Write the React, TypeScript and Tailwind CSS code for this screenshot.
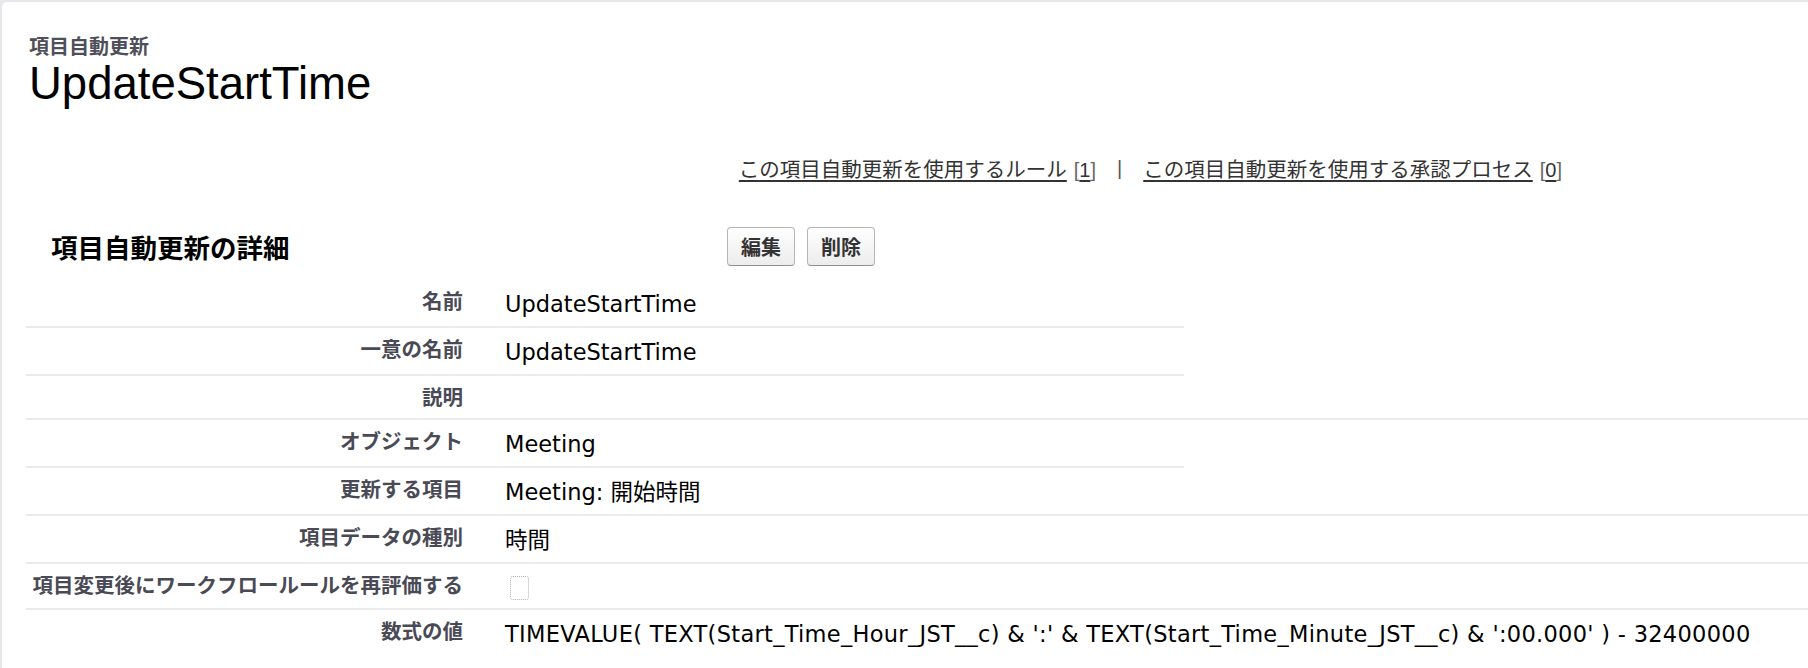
import React from "react";

const cjk = "font-['Noto_Sans_CJK_JP',sans-serif]";
const val = "font-['DejaVu_Sans','Noto_Sans_CJK_JP',sans-serif]";

type Row = { label: string; value?: React.ReactNode; h: string; full: boolean; wide?: boolean };

const ROWS: Row[] = [
  { label: "名前", value: "UpdateStartTime", h: "h-[46px]", full: false },
  { label: "一意の名前", value: "UpdateStartTime", h: "h-[46px]", full: false },
  { label: "説明", h: "h-[42px]", full: true },
  { label: "オブジェクト", value: "Meeting", h: "h-[46px]", full: false },
  { label: "更新する項目", value: "Meeting: 開始時間", h: "h-[46px]", full: true },
  { label: "項目データの種別", value: "時間", h: "h-[46px]", full: true },
  {
    label: "項目変更後にワークフロールールを再評価する",
    value: <span className="ml-[5px] mt-[-1px] block h-[24px] w-[19px] rounded-[3px] border border-dotted border-[#b0b0b0]" />,
    h: "h-[44px]",
    full: true,
  },
  {
    label: "数式の値",
    value: "TIMEVALUE( TEXT(Start_Time_Hour_JST__c) & ':' & TEXT(Start_Time_Minute_JST__c) & ':00.000' ) - 32400000",
    h: "h-[46px]",
    full: false,
    wide: true,
  },
];

function UsageLink({ text, count }: { text: string; count: number }) {
  return (
    <span className="flex items-baseline">
      <a className={`${cjk} text-[20.5px] leading-[20px] text-[#333] underline underline-offset-[3px]`}>{text}</a>
      <span className="ml-[7px] font-['Liberation_Sans',sans-serif] text-[20px] leading-[20px] text-[#666]">
        [<span className="text-[#333] underline underline-offset-[3px]">{count}</span>]
      </span>
    </span>
  );
}

function Btn({ children }: { children: React.ReactNode }) {
  return (
    <button
      type="button"
      className={`${cjk} h-[39px] rounded-[4px] border border-[#b5b5b5] border-b-[#8f8f8f] bg-gradient-to-b from-white to-[#ececec] px-[13px] text-[20px] font-bold leading-[20px] text-[#333]`}
    >
      {children}
    </button>
  );
}

export default function App() {
  return (
    <div className="min-h-[668px] w-[1808px] overflow-hidden bg-[#e6e7ea] pl-[2px] pt-[2px]">
      <div className="min-h-[666px] rounded-tl-[5px] bg-white">
        <div className="pl-[27px] pt-[34px]">
          <div className={`${cjk} text-[20px] font-bold leading-[20px] text-[#4f4f59]`}>項目自動更新</div>
          <h1 className="mt-[5px] font-['Liberation_Sans',sans-serif] text-[45.5px] leading-[45px] text-black">UpdateStartTime</h1>
        </div>

        <div className="mt-[52px] flex justify-end pr-[246px]">
          <UsageLink text="この項目自動更新を使用するルール" count={1} />
          <span className="px-[21px] font-['Liberation_Sans',sans-serif] text-[20px] leading-[20px] text-[#555]">|</span>
          <UsageLink text="この項目自動更新を使用する承認プロセス" count={0} />
        </div>

        <div className="ml-[24px] mt-[47px] flex h-[39px] items-center">
          <h2 className={`${cjk} w-[701px] pl-[25px] text-[26.5px] font-bold leading-[26px] text-black`}>項目自動更新の詳細</h2>
          <div className="flex gap-[12px]">
            <Btn>編集</Btn>
            <Btn>削除</Btn>
          </div>
        </div>

        <div className="ml-[24px] mt-[14px]">
          {ROWS.map((r, i) => (
            <div key={r.label}>
              <div className={`flex ${r.h}`}>
                <div className={`${cjk} w-[457px] shrink-0 pr-[20px] pt-[10px] text-right text-[20.5px] font-bold leading-[20px] text-[#4a4a56]`}>
                  {r.label}
                </div>
                <div
                  className={`${val} ${r.wide ? "flex-1 tracking-[0.3px]" : "w-[701px]"} whitespace-nowrap pl-[22px] pt-[13px] text-[22.5px] leading-[22px] text-black`}
                >
                  {r.value}
                </div>
              </div>
              {i < ROWS.length - 1 && (
                <div className="flex h-[2px]">
                  <div className="w-[1158px] bg-[#ebebeb]" />
                  {r.full && <div className="flex-1 bg-[#ebebeb]" />}
                </div>
              )}
            </div>
          ))}
        </div>
      </div>
    </div>
  );
}
